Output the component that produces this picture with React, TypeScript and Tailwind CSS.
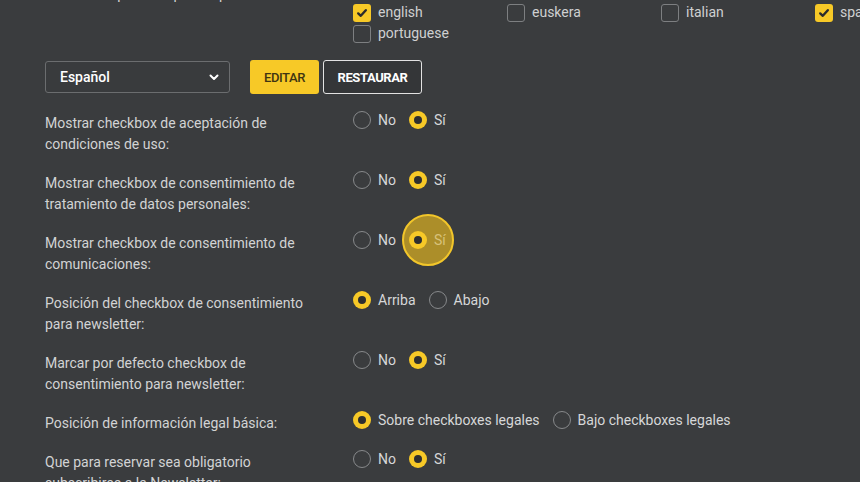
import React from "react";

function Radio({ checked }: { checked: boolean }) {
  return checked ? (
    <span className="flex h-[18px] w-[18px] shrink-0 items-center justify-center rounded-full bg-[#f7c927]">
      <span className="block h-[8px] w-[8px] rounded-full bg-[#2e2f30]" />
    </span>
  ) : (
    <span className="block h-[18px] w-[18px] shrink-0 rounded-full border-[1.5px] border-[#87898b]" />
  );
}

function Check({ checked }: { checked: boolean }) {
  return checked ? (
    <span className="flex h-[18px] w-[18px] shrink-0 items-center justify-center rounded-[3px] bg-[#f7c927]">
      <svg width="12" height="12" viewBox="0 0 12 12">
        <path d="M2.2 6.4 L4.8 8.8 L9.8 3.2" fill="none" stroke="#2b2c2d" strokeWidth="2.4" strokeLinecap="round" strokeLinejoin="round" />
      </svg>
    </span>
  ) : (
    <span className="block h-[18px] w-[18px] shrink-0 rounded-[3px] border-[1.5px] border-[#7d7f81]" />
  );
}

type Opt = { label: string; checked: boolean; ripple?: boolean };

function RadioGroup({ opts }: { opts: Opt[] }) {
  return (
    <div className="-mt-[2px] flex items-center gap-[13px]">
      {opts.map((o) => (
        <label key={o.label} className="relative flex h-[18px] items-center gap-[7px]">
          {o.ripple && (
            <span className="absolute left-[-7px] top-[-17px] block h-[52px] w-[52px] rounded-full border-2 border-[#f2c62a] bg-[#c9a224]/80" />
          )}
          <span className="relative block">
            <Radio checked={o.checked} />
          </span>
          <span className={o.ripple ? "relative text-[#d8c27a]" : "text-[#d6d7d8]"}>{o.label}</span>
        </label>
      ))}
    </div>
  );
}

const rows: { label: React.ReactNode; opts: Opt[] }[] = [
  {
    label: (
      <>
        Mostrar checkbox de aceptación de
        <br />
        condiciones de uso:
      </>
    ),
    opts: [
      { label: "No", checked: false },
      { label: "Sí", checked: true },
    ],
  },
  {
    label: (
      <>
        Mostrar checkbox de consentimiento de
        <br />
        tratamiento de datos personales:
      </>
    ),
    opts: [
      { label: "No", checked: false },
      { label: "Sí", checked: true },
    ],
  },
  {
    label: (
      <>
        Mostrar checkbox de consentimiento de
        <br />
        comunicaciones:
      </>
    ),
    opts: [
      { label: "No", checked: false },
      { label: "Sí", checked: true, ripple: true },
    ],
  },
  {
    label: (
      <>
        Posición del checkbox de consentimiento
        <br />
        para newsletter:
      </>
    ),
    opts: [
      { label: "Arriba", checked: true },
      { label: "Abajo", checked: false },
    ],
  },
  {
    label: (
      <>
        Marcar por defecto checkbox de
        <br />
        consentimiento para newsletter:
      </>
    ),
    opts: [
      { label: "No", checked: false },
      { label: "Sí", checked: true },
    ],
  },
  {
    label: <>Posición de información legal básica:</>,
    opts: [
      { label: "Sobre checkboxes legales", checked: true },
      { label: "Bajo checkboxes legales", checked: false },
    ],
  },
  {
    label: (
      <>
        Que para reservar sea obligatorio
        <br />
        subscribirse a la Newsletter:
      </>
    ),
    opts: [
      { label: "No", checked: false },
      { label: "Sí", checked: true },
    ],
  },
];

export default function App() {
  const langs = [
    { l: "english", c: true },
    { l: "euskera", c: false },
    { l: "italian", c: false },
    { l: "spanish", c: true },
    { l: "portuguese", c: false },
  ];
  return (
    <div
      className="h-[482px] w-[860px] overflow-hidden bg-[#3a3c3e] text-[14px] leading-[21px] text-[#d2d3d4]"
      style={{ fontFamily: "Roboto, 'Noto Sans', Arial, sans-serif" }}
    >
      <div className="pl-[45px]">
        <div className="flex">
          <div className="w-[308px] shrink-0 -mt-[16px] whitespace-nowrap text-[#d2d3d4]">Idiomas disponibles para el proceso:</div>
          <div className="grid w-[616px] shrink-0 grid-cols-4 pt-[2px]">
            {langs.map((x) => (
              <label key={x.l} className="flex h-[21px] items-center gap-[7px]">
                <Check checked={x.c} />
                <span className="text-[#cfd0d1]">{x.l}</span>
              </label>
            ))}
          </div>
        </div>

        <div className="mt-[16px] flex items-center">
          <div className="flex h-[32px] w-[185px] items-center justify-between rounded-[3px] border border-[#6b6d6f] bg-[#393b3d] pl-[14px] pr-[9px]">
            <span className="font-medium text-white">Español</span>
            <svg width="12" height="12" viewBox="0 0 12 12">
              <path d="M2.5 4.5 L6 8 L9.5 4.5" fill="none" stroke="#ffffff" strokeWidth="2" strokeLinecap="round" strokeLinejoin="round" />
            </svg>
          </div>
          <button className="ml-[20px] flex h-[34px] w-[69px] items-center justify-center rounded-[3px] bg-[#f7c927] text-[13px] font-medium tracking-[-0.4px] text-[#3f3512]">
            EDITAR
          </button>
          <button className="ml-[4px] flex h-[34px] w-[99px] items-center justify-center rounded-[3px] border border-[#e2e2e2] bg-[#343638] text-[13px] font-bold tracking-[-0.4px] text-white">
            RESTAURAR
          </button>
        </div>

        <div className="mt-[19px] flex flex-col gap-[18px]">
          {rows.map((r, i) => (
            <div key={i} className="flex items-start">
              <div className="w-[308px] shrink-0">{r.label}</div>
              <RadioGroup opts={r.opts} />
            </div>
          ))}
        </div>
      </div>
    </div>
  );
}
